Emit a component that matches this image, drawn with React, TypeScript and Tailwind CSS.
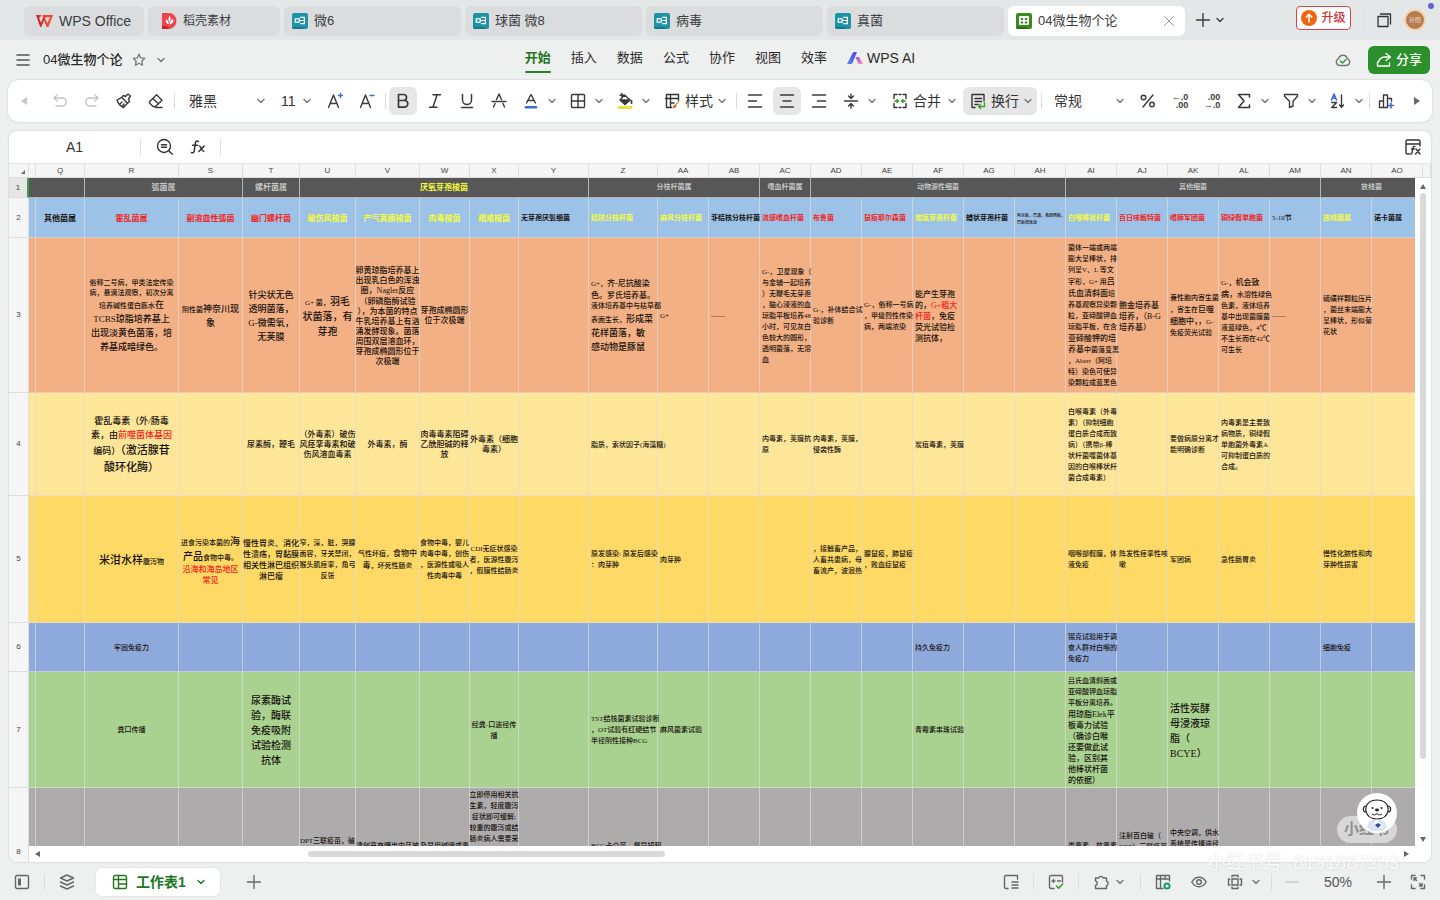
import type { ReactNode } from "react";

/* ---------- small building blocks ---------- */

type SvgProps = { children: ReactNode; size?: string; box?: string; className?: string };

function Svg({ children, size = "size-[18px]", box = "0 0 18 18", className = "" }: SvgProps) {
  return (
    <svg
      viewBox={box}
      className={`${size} shrink-0 ${className}`}
      fill="none"
      stroke="currentColor"
      strokeWidth="1.4"
      strokeLinecap="round"
      strokeLinejoin="round"
      aria-hidden="true"
    >
      {children}
    </svg>
  );
}

function Chevron({ className = "text-[#777]" }: { className?: string }) {
  return (
    <Svg size="size-2.5" box="0 0 10 10" className={className}>
      <path d="M2 3.5 5 6.5 8 3.5" />
    </Svg>
  );
}

function Divider({ className = "h-4" }: { className?: string }) {
  return <span className={`w-px shrink-0 bg-[#dcdcdc] ${className}`} />;
}

function Tool({ label, children, active = false, muted = false }: { label: string; children: ReactNode; active?: boolean; muted?: boolean }) {
  return (
    <button
      type="button"
      aria-label={label}
      className={`flex h-7 w-8 shrink-0 items-center justify-center ${muted ? "text-[#c4c4c4]" : "text-[#3a3a3a]"}`}
    >
      <span className={`flex size-7 items-center justify-center rounded-md ${active ? "bg-[#e6e6e6]" : ""}`}>{children}</span>
    </button>
  );
}

function Drop({ label, children }: { label: string; children: ReactNode }) {
  return (
    <button type="button" aria-label={label} className="flex h-7 w-[47px] shrink-0 items-center text-[#3a3a3a]">
      <span className="flex w-8 items-center justify-center">{children}</span>
      <Chevron />
    </button>
  );
}

/* ---------- title bar ---------- */

function MindIcon() {
  return (
    <svg viewBox="0 0 16 16" className="size-4 shrink-0" aria-hidden="true">
      <rect width="16" height="16" rx="2" fill="#1e93a6" />
      <path d="M0 14h10l2 2H2a2 2 0 0 1-2-2z" fill="#14788a" />
      <g fill="none" stroke="#fff" strokeWidth="1.2">
        <rect x="3.200" y="5.800" width="4" height="3.400" />
        <path d="M7.200 7.500h2.600M8.200 4.400h4.200v6.200H8.200M9.800 7.500h2.600" />
      </g>
    </svg>
  );
}

function SheetIcon() {
  return (
    <svg viewBox="0 0 16 16" className="size-4 shrink-0" aria-hidden="true">
      <rect width="16" height="16" rx="2" fill="#3c8a1e" />
      <path d="M0 14h10l2 2H2a2 2 0 0 1-2-2z" fill="#2c6d13" />
      <rect x="3" y="3" width="10" height="9" rx="1" fill="#fff" />
      <path d="M4.800 5h2.400v2H4.800zM8.800 5h2.400v2H8.800zM4.800 8.400h2.400v2H4.800zM8.800 8.400h2.400v2H8.800z" fill="#3c8a1e" />
    </svg>
  );
}

const fileTabs = ["微6", "球菌 微8", "病毒", "真菌"];

function TitleBar() {
  return (
    <header className="flex h-10 shrink-0 items-center gap-1 bg-[#e4e7e8] pl-6 text-[14px] text-[#3a3c3e]">
      <button type="button" className="mt-0.5 flex h-[30px] w-[120px] items-center gap-1.5 rounded-md bg-[#dadcdd] pl-3 text-[14px]">
        <svg viewBox="0 0 17 12" className="h-3 w-[17px]" aria-hidden="true">
          <path d="M0 0h5.200l-1 2.200H3l2 5.600L8.200 0h2.200L5.200 12h-1z" fill="#d9262c" />
          <path d="M6.200 0H17l-4.600 12h-1.600L7.800 5.400l1-2.400 2.800 5.200 2.400-6H7z" fill="#ee4a2a" />
        </svg>
        WPS Office
      </button>
      <button type="button" className="mt-0.5 flex h-[30px] w-[132px] items-center gap-1.5 rounded-md bg-[#dadcdd] pl-[13px] text-[12px]">
        <svg viewBox="0 0 16 16" className="size-4" aria-hidden="true">
          <path d="M1 0h7a7.400 7.400 0 0 1 7.400 8A7.600 7.600 0 0 1 8 16H1z" fill="#ee4350" />
          <path d="M1 13h5l2 3H1z" fill="#c9202f" />
          <path d="M8.600 3c1.600 1.800 1.600 4-.2 6C7 7 7.200 4.800 8.600 3zM5 6.500c1.500.4 2.600 2 3 4.700-2.500-.4-3.600-2.200-3-4.700zM12.400 6c.5 3-1 5-4 5.500.3-3 1.700-4.800 4-5.500z" fill="#fff" />
        </svg>
        稻壳素材
      </button>
      {fileTabs.map((t) => (
        <button key={t} type="button" className="mt-0.5 flex h-[30px] min-w-0 basis-[177px] items-center gap-1.5 rounded-md bg-[#dadcdd] pl-2 text-[13px]">
          <MindIcon />
          {t}
        </button>
      ))}
      <div className="mt-0.5 flex h-[30px] min-w-0 basis-[177px] items-center gap-1.5 rounded-md bg-white pr-2.5 pl-2 text-[13px]">
        <SheetIcon />
        <span className="flex-1">04微生物个论</span>
        <button type="button" aria-label="关闭标签" className="text-[#999]">
          <Svg size="size-3" box="0 0 12 12"><path d="m1.500 1.500 9 9m0-9-9 9" strokeWidth="1" /></Svg>
        </button>
      </div>
      <button type="button" aria-label="新建标签" className="ml-1.5 text-[#3a3c3e]">
        <Svg size="size-4" box="0 0 16 16"><path d="M8 1.500v13M1.500 8h13" /></Svg>
      </button>
      <button type="button" aria-label="标签列表"><Chevron className="text-[#3a3c3e]" /></button>
      <div className="ml-auto flex items-center pr-3.5">
        <button type="button" className="-mt-1 flex h-6 w-[55px] items-center justify-center gap-1 rounded border border-[#d9434a] bg-white text-[12px] font-medium text-[#cf2f37]">
          <svg viewBox="0 0 16 16" className="size-4" aria-hidden="true">
            <circle cx="8" cy="8" r="8" fill="#ee6410" />
            <path d="M8 12.500V4.500M4.800 7.500 8 4.300l3.200 3.200" fill="none" stroke="#fff" strokeWidth="1.600" />
          </svg>
          升级
        </button>
        <Divider className="ml-3 h-4" />
        <button type="button" aria-label="窗口" className="ml-3 text-[#333]">
          <Svg size="size-4" box="0 0 16 16"><path d="M2 4.500h10v10H2zM4.500 2h10v10" strokeWidth="1.300" /></Svg>
        </button>
        <button type="button" aria-label="账户" className="relative ml-3 flex size-[22px] items-center justify-center rounded-full border-2 border-[#f5d3ad] bg-[#b37c50] text-[6px] text-[#f0dcc8]">
          孙阳
          <span className="absolute -top-2 -right-2.5 size-1.5 rounded-full bg-[#6062d8]" />
        </button>
      </div>
    </header>
  );
}

/* ---------- menu ---------- */

const menus = ["插入", "数据", "公式", "协作", "视图", "效率"];

function MenuBar() {
  return (
    <div className="grid h-10 shrink-0 grid-cols-[1fr_auto_1fr] items-center px-2.5 text-[13px] text-[#2b2b2b]">
      <div className="flex items-center pl-1.5">
        <button type="button" aria-label="菜单" className="text-[#555]">
          <Svg size="size-3.5" box="0 0 14 14"><path d="M1 2h12M1 7h12M1 12h12" strokeWidth="1.600" /></Svg>
        </button>
        <span className="ml-[13px] font-medium">04微生物个论</span>
        <button type="button" aria-label="收藏" className="ml-2.5 text-[#777]">
          <Svg size="size-3.5" box="0 0 14 14"><path d="m7 1.200 1.700 3.700 4 .5-2.900 2.800.7 4L7 10.300l-3.500 1.900.7-4L1.300 5.400l4-.5z" strokeWidth="1.300" /></Svg>
        </button>
        <button type="button" aria-label="文件选项" className="ml-2.5"><Chevron /></button>
      </div>
      <nav className="flex h-full items-center gap-5">
        <a href="#start" className="flex h-full flex-col justify-end gap-1 pb-[7px] font-bold text-[#22761f]">
          开始
          <span className="h-0.5 rounded bg-[#2c7d27]" />
        </a>
        {menus.map((m) => (
          <a key={m} href={`#${m}`} className="-mt-1">{m}</a>
        ))}
        <a href="#ai" className="-mt-1 flex items-center gap-1">
          <svg viewBox="0 0 16 14" className="h-3.5 w-4" aria-hidden="true">
            <defs>
              <linearGradient id="aiA" x1="0" y1="1" x2="1" y2="0">
                <stop offset="0" stopColor="#4a8cf5" />
                <stop offset="1" stopColor="#5a3de0" />
              </linearGradient>
              <linearGradient id="aiB" x1="0" y1="0" x2="1" y2="1">
                <stop offset="0" stopColor="#a04be0" />
                <stop offset="1" stopColor="#fb9aa8" />
              </linearGradient>
            </defs>
            <path d="M0 13 5.500 2.300C6 1.300 6.700 1 8 1h2L5.500 12c-.4.800-1 1-2 1z" fill="url(#aiA)" />
            <path d="M8.500 6h2.600c.8 0 1.300.4 1.600 1L16 13h-3.400c-.8 0-1.300-.3-1.600-1z" fill="url(#aiB)" />
          </svg>
          <span className="text-[14px]">WPS AI</span>
        </a>
      </nav>
      <div className="flex items-center justify-end">
        <button type="button" aria-label="已保存到云端" className="text-[#777]">
          <Svg size="size-4" box="0 0 16 16">
            <path d="M4.500 13.500a3.500 3.500 0 0 1-.8-6.800 4.400 4.400 0 0 1 8.600 0 3.500 3.500 0 0 1-.8 6.800z" />
            <path d="m5.500 9 2 2 3.500-3.500" stroke="#2a9a4a" />
          </Svg>
        </button>
        <button type="button" className="ml-[17px] flex h-7 w-[62px] items-center justify-center gap-1 rounded-md bg-[#2b8f2c] text-[13px] font-medium text-white">
          <Svg size="size-4" box="0 0 16 16">
            <path d="M10 1.500 14.500 5 10 8.500M14 5H9.500C5.500 5 3.200 7 2.500 10M1.500 10v4h12v-3" />
          </Svg>
          分享
        </button>
      </div>
    </div>
  );
}

/* ---------- toolbar ---------- */

function Toolbar() {
  return (
    <div className="mx-2 flex h-[42px] shrink-0 items-center overflow-hidden rounded-[10px] bg-white text-[14px] text-[#333] shadow-[0_0_2px_rgba(0,0,0,0.2)]" role="toolbar">
      <Tool label="向左滚动" muted><svg viewBox="0 0 6 8" className="h-2 w-1.5" fill="currentColor"><path d="M6 0v8L0 4z" /></svg></Tool>
      <span className="w-1 shrink-0" />
      <Tool label="撤销" muted><Svg><path d="M6 3 3 6l3 3M3.500 6h7.700a3.700 3.700 0 0 1 0 8H5" /></Svg></Tool>
      <Tool label="恢复" muted><Svg><path d="m12 3 3 3-3 3M14.500 6H6.800a3.700 3.700 0 0 0 0 8H13" /></Svg></Tool>
      <Tool label="格式刷">
        <Svg><path d="M10.500 4.500 13 2l2.500 2-2 3 1 2.500-2 1.800L6.700 5.300l1.800-1.800zM6.700 5.300 2 8c1 3.500 3 6 6.500 7.500l4-4.200M5 12l2-2M7.500 14l1.500-2" /></Svg>
      </Tool>
      <Tool label="清除"><Svg><path d="m2.500 9.800 7-7 5.500 5.500-6.500 6.200H6L2.500 11zM6 6.500l5.500 5.500M8.500 15.500H15" /></Svg></Tool>
      <span className="flex w-1 shrink-0 justify-center"><Divider /></span>
      <label className="relative flex w-24 shrink-0 items-center">
        <select aria-label="字体" className="w-full appearance-none bg-transparent pl-[13px]"><option>雅黑</option></select>
        <span className="pointer-events-none absolute right-1.5"><Chevron /></span>
      </label>
      <label className="relative flex w-[47px] shrink-0 items-center">
        <select aria-label="字号" className="w-full appearance-none bg-transparent pl-[9px]"><option>11</option></select>
        <span className="pointer-events-none absolute right-[7px]"><Chevron /></span>
      </label>
      <Tool label="增大字号"><Svg><path d="M2.500 15.500 7.500 3l5 12.500M4.500 11.500h6" /><path d="M14.500 1.500v4M12.500 3.500h4" stroke="#3b6bd6" /></Svg></Tool>
      <Tool label="减小字号"><Svg><path d="M2.500 15.500 7.500 3l5 12.500M4.500 11.500h6" /><path d="M12 3.500h4" stroke="#3b6bd6" /></Svg></Tool>
      <span className="flex w-1 shrink-0 justify-center"><Divider /></span>
      <Tool label="加粗" active><Svg><path d="M4.500 2.500h5a3 3 0 0 1 0 6h-5zM4.500 8.500h6a3.300 3.300 0 0 1 0 6.600h-6z" strokeWidth="1.700" /></Svg></Tool>
      <Tool label="倾斜"><Svg><path d="M7 2.800h7.500M3.500 15.200H11M11 3 7 15" strokeWidth="1.500" /></Svg></Tool>
      <Tool label="下划线"><Svg><path d="M4.500 2.500V8a4.500 4.500 0 0 0 9 0V2.500M3.500 15.500h11" strokeWidth="1.500" /></Svg></Tool>
      <Tool label="删除线"><Svg><path d="M2 9.500h14M6.500 7.500 9 2l2.500 5.500M5 11.500 3.500 15M13 11.500l1.500 3.500" /></Svg></Tool>
      <Drop label="字体颜色"><Svg><path d="M4.500 11 9 2.500l4.500 8.500M6 8.500h6" /><path d="M4 15.300h10" stroke="#3e6fd0" strokeWidth="2.600" /></Svg></Drop>
      <Drop label="边框"><Svg><rect x="2.500" y="2.500" width="13" height="13" rx="1" /><path d="M9 2.500v13M2.500 9h13" /></Svg></Drop>
      <Drop label="填充颜色">
        <Svg>
          <path d="M4.500 8H14l-5 4z" fill="currentColor" />
          <path d="m4 8 4.500-5L14 8l-5 4.500zM4 3l3 1.500M5.500 1.500l3 3" />
          <path d="M15.500 9v2" strokeWidth="1.800" />
          <path d="M3 15.500h12" stroke="#e6e03a" strokeWidth="3" />
        </Svg>
      </Drop>
      <button type="button" className="flex w-[77px] shrink-0 items-center gap-1 pl-[7px]">
        <Svg>
          <path d="M8.500 15.500h-5v-13h12V8M2.500 6.500h13M7.500 2.500v13M7.500 11H11" />
          <path d="m16 9-3.500 4c1 .5 1 1.500-.5 2.500l-2 .5c.2-1.500.7-2.700 2.500-3z" stroke="#d8642a" fill="#d8642a" strokeWidth="0.800" />
        </Svg>
        样式
        <Chevron />
      </button>
      <span className="flex w-1.5 shrink-0 justify-center"><Divider /></span>
      <Tool label="左对齐"><Svg><path d="M2.500 3h13M2.500 9h8M2.500 15h13" strokeWidth="1.500" /></Svg></Tool>
      <Tool label="居中对齐" active><Svg><path d="M2.500 3h13M5 9h8M2.500 15h13" strokeWidth="1.500" /></Svg></Tool>
      <Tool label="右对齐"><Svg><path d="M2.500 3h13M7.500 9h8M2.500 15h13" strokeWidth="1.500" /></Svg></Tool>
      <Drop label="垂直居中"><Svg><path d="M2.500 9h13M9 2v4.500M6.500 4 9 6.500 11.500 4M9 16v-4.500M6.500 14 9 11.500l2.500 2.500" /></Svg></Drop>
      <button type="button" className="flex w-[81px] shrink-0 items-center gap-1 pl-[9px]">
        <Svg>
          <path d="M6 2.500H3v4M12 2.500h3v4M6 15.500H3v-4M12 15.500h3v-4M8 2.500h2M8 15.500h2" />
          <path d="M3.500 9H7M6 7.500 7.500 9 6 10.500M14.500 9H11M12 7.500 10.500 9l1.500 1.500" stroke="#3c9a2f" />
        </Svg>
        合并
        <span className="ml-0.5"><Chevron /></span>
      </button>
      <button type="button" className="flex h-7 w-[74px] shrink-0 items-center gap-1 rounded-md bg-[#e6e6e6] pl-1.5">
        <Svg>
          <path d="M6 15.500H3v-13h12V9M6 6.500h6.500M6 9.500h6.500M6 12.500h3" />
          <path d="M15.500 11v3.500H9.500M11.500 12.500l-2 2 2 2" stroke="#3c9a2f" />
        </Svg>
        换行
        <Chevron />
      </button>
      <span className="flex w-2 shrink-0 justify-center"><Divider /></span>
      <label className="relative flex w-[87px] shrink-0 items-center">
        <select aria-label="数字格式" className="w-full appearance-none bg-transparent pl-[9px]"><option>常规</option></select>
        <span className="pointer-events-none absolute right-[7px]"><Chevron /></span>
      </label>
      <Tool label="百分比"><Svg><circle cx="4.500" cy="5.500" r="2.300" /><circle cx="13" cy="12.500" r="2.300" /><path d="M14 3 4 15" /></Svg></Tool>
      <Tool label="增加小数位">
        <span className="flex flex-col text-right text-[9px] leading-2 font-bold"><span>←.0</span><span>.00</span></span>
      </Tool>
      <Tool label="减少小数位">
        <span className="flex flex-col text-right text-[9px] leading-2 font-bold"><span>.00</span><span>→.0</span></span>
      </Tool>
      <Drop label="求和"><Svg><path d="M14.500 5V2.500h-11L9 9l-5.500 6.500h11V13" strokeWidth="1.600" /></Svg></Drop>
      <Drop label="筛选"><Svg><path d="M2.500 2.500h13v1.700l-4.500 5V14l-3.500 1.500V9.200l-5-5z" /></Svg></Drop>
      <Drop label="排序">
        <Svg>
          <path d="M2.500 8 5 2l2.500 6M3.300 6.300h3.400" stroke="#3b6bd6" strokeWidth="1.600" />
          <path d="M2.800 10.500h4.700l-4.700 5h4.700" strokeWidth="1.600" />
          <path d="M12.500 3v12M10.500 13l2 2.200 2-2.200" />
        </Svg>
      </Drop>
      <Divider />
      <Tool label="插入图表">
        <Svg><path d="M2.500 9h4v6.500h-4zM6.500 15.500V3h4v12.500h-4M10.500 6.500h4V9" /><path d="M14 11v5M11.500 13.500h5" stroke="#3b6bd6" strokeWidth="1.600" /></Svg>
      </Tool>
      <span className="ml-auto pr-3 text-[#666]"><svg viewBox="0 0 6 8" className="h-2 w-1.5" fill="currentColor"><path d="M0 0v8l6-4z" /></svg></span>
    </div>
  );
}

/* ---------- sheet data ---------- */

/*
 * Rich text markup: "\n" starts a new line, {x} switches style.
 * Sizes: c v s t m l x h   Colours: r(ed) y(ellow) w(hite) k(default)   Weight: b(old) n(ormal)
 */
const sizeClass: Record<string, string> = {
  c: "text-[4px] leading-[6px]",
  v: "text-[7px] leading-[10px]",
  s: "text-[7px] leading-[11px]",
  t: "text-[8px] leading-[10px]",
  m: "text-[8px] leading-[11px]",
  l: "text-[9px] leading-[14px]",
  x: "text-[10px] leading-[15px]",
  h: "text-[11px] leading-[17px]",
};
const colourClass: Record<string, string> = { r: "text-[#f0261c]", y: "text-[#f6fb3a]", k: "", w: "text-[#d6d6d6]" };

function Rich({ text, center }: { text: string; center: boolean }) {
  let size = "s";
  let colour = "k";
  let bold = false;
  const lines = text.split("\n").map((line, i) => {
    const runs: ReactNode[] = [];
    line.split(/(\{[a-z]\})/).forEach((part, j) => {
      const mark = /^\{([a-z])\}$/.exec(part);
      if (mark) {
        const k = mark[1];
        if (k in sizeClass) size = k;
        else if (k in colourClass) colour = k;
        else bold = k === "b";
      } else if (part) {
        runs.push(
          <span key={j} className={`${sizeClass[size]} ${colourClass[colour]} ${bold ? "font-bold" : "font-medium"}`}>
            {part}
          </span>,
        );
      }
    });
    return <div key={i} className="leading-[0] whitespace-nowrap">{runs}</div>;
  });
  return <div className={`flex flex-col ${center ? "items-center" : "items-start pl-0.5"}`}>{lines}</div>;
}

const columns: [string, string][] = [
  ["", "w-[7px]"], ["Q", "w-[49px]"], ["R", "w-[94px]"], ["S", "w-16"], ["T", "w-[57px]"], ["U", "w-14"],
  ["V", "w-16"], ["W", "w-[50px]"], ["X", "w-[49px]"], ["Y", "w-[70px]"], ["Z", "w-[69px]"], ["AA", "w-[51px]"],
  ["AB", "w-[51px]"], ["AC", "w-[51px]"], ["AD", "w-[51px]"], ["AE", "w-[51px]"], ["AF", "w-[51px]"],
  ["AG", "w-[51px]"], ["AH", "w-[51px]"], ["AI", "w-[51px]"], ["AJ", "w-[51px]"], ["AK", "w-[51px]"],
  ["AL", "w-[51px]"], ["AM", "w-[51px]"], ["AN", "w-[51px]"], ["AO", "w-[51px]"],
];

const groups: [string, number][] = [
  ["", 2], ["{t}{w}弧菌属", 2], ["{t}{w}螺杆菌属", 1], ["{t}{y}{b}厌氧芽孢梭菌", 5], ["{w}分枝杆菌属", 3],
  ["{w}嗜血杆菌属", 1], ["{w}动物源性细菌", 5], ["{w}其他细菌", 5], ["{w}放线菌", 2], ["", 1],
];

type Row = { n: number; height: string; fill: string; top?: boolean; cells: Record<string, string> };

const rows: Row[] = [
  {
    n: 2, height: "h-10", fill: "bg-[#9dc2e7]",
    cells: {
      Q: "{t}{b}其他菌属", R: "{t}{b}{r}霍乱菌属", S: "{t}{b}{r}副溶血性弧菌", T: "{t}{b}{r}幽门螺杆菌",
      U: "{t}{b}{y}破伤风梭菌", V: "{t}{b}{y}产气荚膜梭菌", W: "{t}{b}{y}肉毒梭菌", X: "{t}{b}{y}艰难梭菌",
      Y: "{b}无芽孢厌氧细菌", Z: "{y}{b}结核分枝杆菌", AA: "{y}{b}麻风分枝杆菌", AB: "{b}非结核分枝杆菌",
      AC: "{r}{b}流感嗜血杆菌", AD: "{r}{b}布鲁菌", AE: "{r}{b}鼠疫耶尔森菌", AF: "{y}{b}炭疽芽孢杆菌",
      AG: "{b}蜡状芽孢杆菌", AH: "{c}阿克斯，巴通，弗朗西斯，\n巴斯德体菌", AI: "{y}{b}白喉棒状杆菌",
      AJ: "{r}{b}百日咳鲍特菌", AK: "{r}{b}嗜肺军团菌", AL: "{r}{b}铜绿假单胞菌", AM: "5-10节",
      AN: "{y}{b}放线菌属", AO: "{b}诺卡菌属",
    },
  },
  {
    n: 3, height: "h-[155px]", fill: "bg-[#f3b084]",
    cells: {
      R: "{v}俗称二号病，甲类法定传染\n病，悬滴法观察，初次分离\n{s}培养碱性蛋白胨水{l}在\nTCBS琼脂培养基上\n出现淡黄色菌落，培\n养基成暗绿色。",
      S: "{s}阴性菌{l}神奈川现\n象",
      T: "{l}针尖状无色\n透明菌落，\nG-微需氧，\n无荚膜",
      U: "{s}G+ 菌，{x}羽毛\n状菌落，有\n芽孢",
      V: "{t}卵黄琼脂培养基上\n出现乳白色的浑浊\n圈，Nagler反应\n{m}（卵磷脂酶试验\n{t}），为本菌的特点\n牛乳培养基上有汹\n涌发酵现象。菌落\n周围双层溶血环，\n芽孢成椭圆形位于\n次极端",
      W: "{t}芽孢成椭圆形\n位于次极端",
      Z: "{s}G+，{m}齐-尼抗酸染\n色。罗氏培养基。\n{s}液体培养基中与枯草都\n表面生长，{l}形成菜\n花样菌落，敏\n感动物是豚鼠",
      AA: "G+", AB: "——",
      AC: "G-，卫星现象（\n与金辅一起培养\n）无鞭毛无芽孢\n，脑心浸液的血\n琼脂平板培养48\n小时，可见灰白\n色较大的圆形，\n透明菌落，无溶\n血",
      AD: "G-，补体结合试\n验诊断",
      AE: "G-，俗称一号病\n，甲级烈性传染\n病，两端浓染",
      AF: "{m}能产生芽孢\n的，{r}G+粗大\n杆菌{k}，免疫\n荧光试验检\n测抗体，",
      AI: "菌体一端或两端\n膨大呈棒状，排\n列呈V、L 等文\n字形，G+ 用{m}吕\n氏血清斜面{s}培\n养基观察异染颗\n粒，亚碲酸钾血\n琼脂平板，在含\n{m}亚碲酸钾的培\n养基{s}中菌落变黑\n，Abert（阿培\n特）染色可使异\n染颗粒成蓝黑色",
      AJ: "{m}鲍金培养基\n培养，（B-G\n培养基）",
      AK: "{s}兼性胞内寄生菌\n，寄生在{m}巨噬\n细胞中，，{s}G-\n免疫荧光试验",
      AL: "{s}G-，{m}机会致\n病，{s}水溶性绿色\n色素，液体培养\n基中出现菌膜菌\n液蓝绿色，4℃\n不生长而在42℃\n可生长",
      AM: "——",
      AN: "硫磺样颗粒压片\n，菌丝末端膨大\n呈棒状，形似菊\n花状",
    },
  },
  {
    n: 4, height: "h-[103px]", fill: "bg-[#fee699]",
    cells: {
      R: "{l}霍乱毒素（外/肠毒\n素，由{r}前噬菌体基因\n{k}编码）{h}（激活腺苷\n酸环化酶）",
      T: "{t}尿素酶，鞭毛",
      U: "{t}（外毒素）破伤\n风痉挛毒素和破\n伤风溶血毒素",
      V: "{t}外毒素，酶",
      W: "{t}肉毒毒素阻碍\n乙酰胆碱的释\n放",
      X: "{t}外毒素（细胞\n毒素）",
      Z: "脂质，索状因子(海藻糖)",
      AC: "内毒素，荚膜抗\n原",
      AD: "内毒素，荚膜，\n侵袭性酶",
      AF: "炭疽毒素，荚膜",
      AI: "白喉毒素（外毒\n素）（抑制细胞\n蛋白质合成而致\n病）（携带β-棒\n状杆菌噬菌体基\n因的白喉棒状杆\n菌合成毒素）",
      AK: "要做病原分离才\n能明确诊断",
      AL: "内毒素是主要致\n病物质，铜绿假\n单胞菌外毒素A\n可抑制蛋白质的\n合成。",
    },
  },
  {
    n: 5, height: "h-[127px]", fill: "bg-[#fed966]",
    cells: {
      R: "{h}米泔水样{s}腹泻物",
      S: "{v}进食污染本菌的{x}海\n产品{v}食物中毒。\n{m}{r}沿海和海岛地区\n常见",
      T: "{m}慢性胃炎、消化\n性溃疡，胃黏膜\n相关性淋巴组织\n淋巴瘤",
      U: "窄，深，脏，哭腺\n面容，牙关禁闭，\n猴头肌痉挛，角弓\n反张",
      V: "气性坏疽，{m}食物中\n毒{s}，坏死性肠炎",
      W: "食物中毒，婴儿\n肉毒中毒，创伤\n，医源性或吸人\n性肉毒中毒",
      X: "CDI无症状感染\n者，医源性腹泻\n，假膜性结肠炎",
      Z: "原发感染: 原发后感染\n：肉芽肿", AA: "肉芽肿",
      AD: "，接触畜产品，\n人畜共患病，母\n畜流产，波浪热",
      AE: "腺鼠疫，肺鼠疫\n，败血症鼠疫",
      AI: "咽喉部假膜，体\n液免疫", AJ: "阵发性痉挛性咳\n嗽", AK: "军团病", AL: "急性肠胃炎",
      AN: "慢性化脓性和肉\n芽肿性损害",
    },
  },
  {
    n: 6, height: "h-[49px]", fill: "bg-[#8ea9db]",
    cells: { R: "牢固免疫力", AF: "持久免疫力", AI: "锡克试验用于调\n查人群对白喉的\n免疫力", AN: "细胞免疫" },
  },
  {
    n: 7, height: "h-[116px]", fill: "bg-[#a9d18f]",
    cells: {
      R: "粪口传播",
      T: "{x}尿素酶试\n验，酶联\n免疫吸附\n试验检测\n抗体",
      X: "经粪-口途径传\n播",
      Z: "TST结核菌素试验诊断\n，OT试验有红硬结节\n半径阴性接种BCG",
      AA: "麻风菌素试验", AF: "青霉素串珠试验",
      AI: "吕氏血清斜面或\n亚碲酸钾血琼脂\n平板分离培养。\n{m}用琼脂Elek平\n板毒力试验\n（确诊白喉\n还要做此试\n验，区别其\n他棒状杆菌\n的依据）",
      AK: "{x}活性炭酵\n母浸液琼\n脂（\nBCYE）",
    },
  },
  {
    n: 8, height: "h-32", fill: "bg-[#aeabac]", top: true,
    cells: {
      U: "DPT三联疫苗，破",
      V: "清创高充曙出内芽被",
      W: "及早用碱喷或毒",
      X: "立即停用相关抗\n生素，轻度腹泻\n症状即可缓解;\n较重的腹泻或结\n肠炎病人需要采",
      Z: "BCG卡介苗，督导短程",
      AI: "类毒素，抗毒素",
      AJ: "注射百白破（\nDPT）三联疫苗",
      AK: "中央空调，供水\n系统是传播途径",
    },
  },
];

const topPad: Record<string, string> = {
  U: "pt-12", V: "pt-[53px]", W: "pt-[53px]", X: "pt-0.5", Z: "pt-[53px]", AI: "pt-[53px]", AJ: "pt-[43px]", AK: "pt-10",
};

const centred = new Set(["Q", "R", "S", "T", "U", "V", "W", "X"]);
const line = "border-r border-b border-[#dcdcdc]/70";
const head = "border-r border-b border-[#dedede] bg-[#f5f5f5] font-['Liberation_Sans'] text-[8px] font-normal text-[#444]";

function Sheet() {
  return (
    <div className="relative min-h-0 flex-1 overflow-hidden">
      <table className="w-full table-fixed border-separate border-spacing-0 font-['Liberation_Serif','Noto_Sans_CJK_SC',serif] text-[#17120e]">
        <colgroup>
          <col className="w-5" />
          {columns.map(([c, w]) => <col key={c} className={w} />)}
          <col />
        </colgroup>
        <thead>
          <tr className="h-3.5">
            <th className={`${head} p-0`}>
              <svg viewBox="0 0 4 4" className="mt-0.5 ml-3 size-1" fill="#666" aria-hidden="true"><path d="M4 0v4H0z" /></svg>
            </th>
            {columns.map(([c]) => <th key={c} scope="col" className={`${head} p-0 leading-3`}>{c}</th>)}
            <th className={`${head} p-0`} />
          </tr>
        </thead>
        <tbody>
          <tr className="h-5">
            <th scope="row" className="border-r-2 border-b border-r-[#3f9a4a] border-b-[#dedede] bg-[#e6e6e6] p-0 font-['Liberation_Sans'] text-[8px] leading-3 font-normal text-[#444]">1</th>
            {groups.map(([t, span], i) => (
              <td key={i} colSpan={span} className={`${line} bg-[#575757] p-0`}><Rich text={t} center /></td>
            ))}
          </tr>
          {rows.map((row) => (
            <tr key={row.n} className={row.height}>
              <th scope="row" className={`${head} p-0`}>{row.n}</th>
              {columns.map(([c]) => (
                <td key={c} className={`${line} ${row.fill} p-0 ${row.top ? `align-top ${topPad[c] ?? ""}` : "pt-0.5 align-middle"}`}>
                  {row.cells[c] ? <Rich text={row.cells[c]} center={centred.has(c)} /> : null}
                </td>
              ))}
              <td className={`${line} ${row.fill} p-0`} />
            </tr>
          ))}
        </tbody>
      </table>

      <div className="absolute top-3.5 right-0 bottom-0 flex w-4 flex-col items-center justify-between bg-white pt-1.5 pb-5 text-[#666]">
        <svg viewBox="0 0 6 5" className="h-[5px] w-1.5" fill="currentColor" aria-hidden="true"><path d="M3 0l3 5H0z" /></svg>
        <span className="mt-1 mb-auto h-[86%] w-1.5 rounded-full bg-[#d9d9d9]" />
        <svg viewBox="0 0 6 5" className="h-[5px] w-1.5" fill="currentColor" aria-hidden="true"><path d="M0 0h6L3 5z" /></svg>
      </div>
      <div className="absolute right-0 bottom-0 left-5 flex h-4 items-center bg-white pr-[22px] pl-1.5 text-[#666]">
        <svg viewBox="0 0 5 6" className="h-1.5 w-[5px]" fill="currentColor" aria-hidden="true"><path d="M5 0v6L0 3z" /></svg>
        <span className="ml-[268px] h-1.5 w-[26%] rounded-full bg-[#d9d9d9]" />
        <svg viewBox="0 0 5 6" className="ml-auto h-1.5 w-[5px]" fill="currentColor" aria-hidden="true"><path d="M0 0v6l5-3z" /></svg>
      </div>
    </div>
  );
}

function SheetPanel() {
  return (
    <main className="mx-[9px] mt-[9px] flex min-h-0 flex-1 flex-col overflow-hidden rounded-lg bg-white shadow-[0_0_2px_rgba(0,0,0,0.22)]">
      <div className="flex h-[33px] shrink-0 items-center border-b border-[#e4e4e4] text-[#333]">
        <input aria-label="名称框" defaultValue="A1" className="w-[131px] bg-transparent text-center text-[14px]" />
        <Divider />
        <button type="button" aria-label="查找" className="ml-[15px]">
          <Svg><circle cx="8" cy="8" r="6.500" /><path d="m12.800 12.800 3.500 3.500M5.500 6.700h5M5.500 9.300h5" /></Svg>
        </button>
        <button type="button" aria-label="插入函数" className="ml-3.5 w-5">
          <Svg size="h-4 w-5" box="0 0 20 18">
            <path d="M10.500 2.800C8 1.500 7.300 3 7 5L5.800 13c-.4 2.400-1.400 3-3.300 2.200M4 7h5.500M11.500 8c1.800 0 2.700 6 5 6M16.800 8 11 14" strokeWidth="1.700" />
          </Svg>
        </button>
        <Divider className="ml-3 h-4" />
        <input aria-label="编辑栏" className="min-w-0 flex-1 bg-transparent px-2 text-[13px]" />
        <button type="button" aria-label="公式面板" className="mr-[9px]">
          <Svg><path d="M5 16H3.500A1.500 1.500 0 0 1 2 14.500V3.500A1.500 1.500 0 0 1 3.500 2h11A1.500 1.500 0 0 1 16 3.500V8M2 6h14" /><path d="M11 8.500c-1.700-.5-2 .5-2.200 2L8 14.500C7.700 16 7 16.300 6 16M7.500 11h3M12 11l4 5M16 11l-4.500 5" strokeWidth="1.300" /></Svg>
        </button>
      </div>
      <Sheet />
    </main>
  );
}

/* ---------- status bar ---------- */

function StatusBar() {
  return (
    <footer className="flex h-[38px] shrink-0 items-center px-3.5 pt-0.5 text-[#666]">
      <button type="button" aria-label="侧栏"><Svg size="size-4" box="0 0 16 16"><rect x="1.500" y="1.500" width="13" height="13" rx="1.500" /><path d="M5.500 4.500v7" strokeWidth="3" strokeLinecap="butt" /></Svg></button>
      <Divider className="ml-3.5 h-4" />
      <button type="button" aria-label="图层" className="ml-[13px]">
        <Svg><path d="m9 2 6.500 3L9 8 2.500 5zM2.500 9 9 12l6.500-3M2.500 13 9 16l6.500-3" /></Svg>
      </button>
      <button type="button" className="ml-5 flex h-7 w-[124px] items-center rounded-md bg-white pl-4 text-[14px] font-bold text-[#22761f] shadow-[0_0_2px_rgba(0,0,0,0.12)]">
        <Svg size="size-4" box="0 0 16 16"><rect x="1.500" y="1.500" width="13" height="13" rx="1.500" /><path d="M1.500 5.500h13M6.500 1.500v13M6.500 10h8" /></Svg>
        <span className="ml-2">工作表1</span>
        <span className="ml-2.5"><Chevron className="text-[#22761f]" /></span>
      </button>
      <button type="button" aria-label="新建工作表" className="ml-[26px]"><Svg size="size-4" box="0 0 16 16"><path d="M8 1.500v13M1.500 8h13" strokeWidth="1.300" /></Svg></button>

      <div className="ml-auto flex items-center">
        <button type="button" aria-label="大纲"><Svg size="size-4" box="0 0 16 16"><path d="M5 14.500H3A1.500 1.500 0 0 1 1.500 13V3A1.500 1.500 0 0 1 3 1.500h11.500V5M9 8h6M9 11h6M9 14h6" /></Svg></button>
        <Divider className="mx-3.5 h-4" />
        <button type="button" aria-label="公式校对"><Svg size="size-4" box="0 0 16 16"><path d="M6 14.500H3A1.500 1.500 0 0 1 1.500 13V3A1.500 1.500 0 0 1 3 1.500h10A1.500 1.500 0 0 1 14.500 3v5M4 7h3M5.500 5.500v3M9.500 7h3" /><path d="m8.500 12 2.200 2.200 4-4.200" stroke="#3c9a2f" strokeWidth="1.600" /></Svg></button>
        <Divider className="mx-3.5 h-4" />
        <button type="button" aria-label="插件" className="flex items-center gap-1">
          <Svg><path d="M2.500 5h3.200a2.300 2.300 0 0 1 4.400 0h3.400v3.200a2.300 2.300 0 0 1 0 4.400V15.500h-11v-3a2.300 2.300 0 0 0 0-4.500z" /></Svg>
          <Chevron />
        </button>
        <Divider className="mr-3.5 ml-[15px] h-4" />
        <button type="button" aria-label="冻结窗格"><Svg size="size-4" box="0 0 16 16"><path d="M8 14.500H1.500v-13h13V7M1.500 5h13M5.500 1.500v13M10 1.500V5" /><circle cx="12" cy="12" r="2.600" stroke="#1a9d6c" strokeWidth="2" /></Svg></button>
        <button type="button" aria-label="护眼模式" className="ml-5"><Svg size="size-4" box="0 0 16 16"><path d="M.8 8C2.500 5 5 3.200 8 3.200S13.500 5 15.200 8c-1.700 3-4.200 4.800-7.200 4.800S2.500 11 .8 8z" /><circle cx="8" cy="8" r="2.300" /></Svg></button>
        <button type="button" aria-label="阅读模式" className="ml-5 flex items-center gap-2">
          <Svg size="size-4" box="0 0 16 16"><rect x="5" y="5" width="6" height="6" /><path d="M5 3V1.500h6V3M5 13v1.500h6V13M3 5H1.500v6H3M13 5h1.500v6H13" /></Svg>
          <Chevron />
        </button>
        <Divider className="mr-3 ml-2.5 h-4" />
        <button type="button" aria-label="缩小" className="text-[#bbb]"><Svg size="size-4" box="0 0 16 16"><path d="M1.500 8h13" strokeWidth="1.200" /></Svg></button>
        <span className="w-[76px] text-center text-[14px] text-[#555]">50%</span>
        <button type="button" aria-label="放大"><Svg size="size-4" box="0 0 16 16"><path d="M8 1.500v13M1.500 8h13" /></Svg></button>
        <button type="button" aria-label="全屏" className="ml-[18px]">
          <Svg size="size-4" box="0 0 16 16"><path d="M1.500 5V1.500H5M11 1.500h3.500V5M14.500 11v3.500H11M5 14.500H1.500V11M4 4l2.500 2.500M12 12 9.500 9.500M4 6.500V4h2.500M12 9.500V12H9.500" /></Svg>
        </button>
      </div>
    </footer>
  );
}

/* ---------- floating assistant and watermark ---------- */

function Overlay() {
  return (
    <div className="pointer-events-none absolute right-[41px] bottom-[25px] flex flex-col items-end">
      <div className="relative mr-0.5 flex h-[27px] w-[60px] items-center rounded-full bg-[#dcdcdc]/90 pl-[7px] text-[15px] font-bold text-[#909090]">
        小红书
        <svg viewBox="0 0 40 40" className="absolute right-0 bottom-2.5 size-10" aria-hidden="true">
          <circle cx="20" cy="20" r="20" fill="#fff" />
          <path d="M10 34c1-5 5-8 10-8s9 3 10 8l-4 4H14z" fill="#dce3f1" />
          <g fill="#fff" stroke="#222" strokeWidth="1.200">
            <path d="M9 13c-3 0-4 6 0 6M31 13c3 0 4 6 0 6" />
            <path d="M9 18C8 11 13 7 20 7s12 4 11 11c-1 5-5 8-11 8S10 23 9 18z" />
          </g>
          <g fill="#222">
            <circle cx="15.500" cy="15" r="1" /><circle cx="24.500" cy="15" r="1" />
            <ellipse cx="20" cy="17" rx="2" ry="1.400" />
          </g>
          <path d="M15 21c2 1.500 3.500 1 5-.5 1.500 1.500 3 2 5 .5" fill="none" stroke="#222" />
          <path d="m17 30 3-4 6 8-5 1z" fill="#fff" />
          <path d="m18 32 3-2 3 2-3 3z" fill="#2b4c9b" />
        </svg>
      </div>
      <span className="mt-2 text-[19px] leading-6 text-white/90 [text-shadow:0_0_2px_rgba(0,0,0,0.16)]">小红书号: 8191887203</span>
    </div>
  );
}

export default function App() {
  return (
    <div className="relative flex h-screen flex-col overflow-hidden bg-[#eeefef] font-['Liberation_Sans','Noto_Sans_CJK_SC',sans-serif]">
      <TitleBar />
      <MenuBar />
      <Toolbar />
      <SheetPanel />
      <StatusBar />
      <Overlay />
    </div>
  );
}
